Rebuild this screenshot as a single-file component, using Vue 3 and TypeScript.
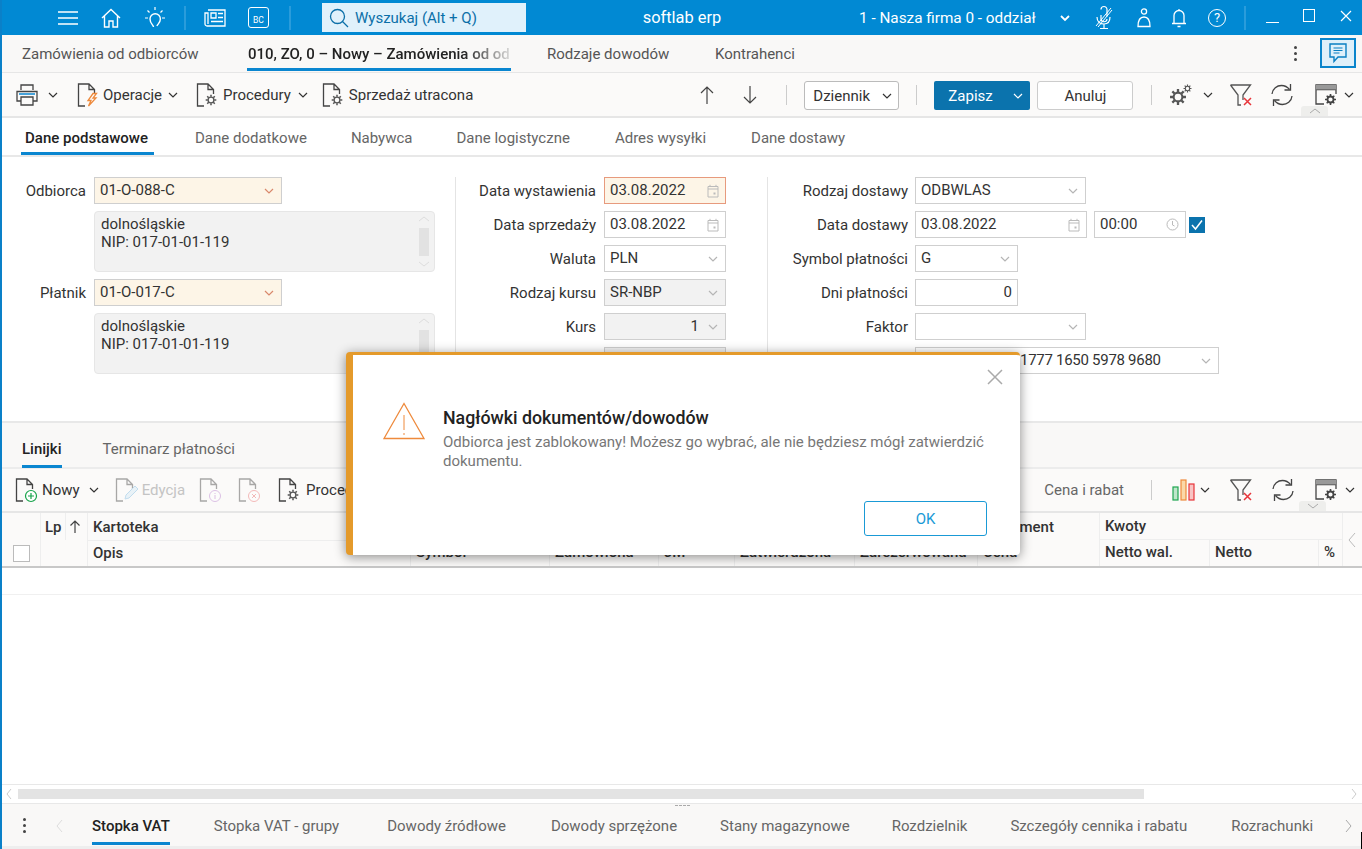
<script setup lang="ts">
const docTabs: string[] = ['Dane dodatkowe', 'Nabywca', 'Dane logistyczne', 'Adres wysyłki', 'Dane dostawy']
const bottomTabs: string[] = ['Stopka VAT - grupy', 'Dowody źródłowe', 'Dowody sprzężone', 'Stany magazynowe', 'Rozdzielnik', 'Szczegóły cennika i rabatu', 'Rozrachunki']
</script>

<template>
  <div class="app">
    <svg class="sprite" width="0" height="0" aria-hidden="true">
      <defs>
        <symbol id="chev" viewBox="0 0 10 6"><path d="M1 1l4 4 4-4" fill="none" stroke="currentColor" stroke-width="1.2" /></symbol>
        <symbol id="doc" viewBox="0 0 24 24"><path d="M8 23H1.500V1H12l5.500 5.500V11M12 1v5.500h5.500" fill="none" stroke="#444" stroke-width="1.300" /></symbol>
        <symbol id="gear" viewBox="0 0 14 14"><circle cx="7" cy="7" r="3.400" fill="none" stroke="currentColor" stroke-width="1.600" /><path d="M7 .8v2.400M7 10.800v2.400M.8 7h2.400M10.800 7h2.400M2.600 2.600l1.700 1.700M9.700 9.700l1.700 1.700M2.600 11.400l1.700-1.700M9.700 4.300l1.700-1.700" stroke="currentColor" stroke-width="1.800" /></symbol>
        <symbol id="cal" viewBox="0 0 12 14"><path d="M1 2.500h10v10.500H1zM1 5h10M3 .8v2M9 .8v2" fill="none" stroke="#bbb" stroke-width="1" /><rect x="6.500" y="8.500" width="2" height="2" fill="#bbb" /></symbol>
        <symbol id="filterx" viewBox="0 0 24 24"><path d="M1.500 2h20l-7.500 10v5M1.500 2L9 12v10h3" fill="none" stroke="#555" stroke-width="1.300" /><path d="M15 15l7 7M22 15l-7 7" stroke="#e8343a" stroke-width="1.500" /></symbol>
        <symbol id="refresh" viewBox="0 0 24 24"><path d="M2 11C2.500 5.500 7 2.500 11.500 2.500c3.500 0 6 1.500 8 4M22 13c-.5 5.500-5 8.500-9.500 8.500-3.500 0-6-1.500-8-4" fill="none" stroke="#444" stroke-width="1.300" /><path d="M20.500 1v6h-6M3.500 23v-6h6" fill="none" stroke="#444" stroke-width="1.300" /></symbol>
        <symbol id="wingear" viewBox="0 0 24 24"><path d="M10 21H2V2h20v9M2 6.500h20" fill="none" stroke="#444" stroke-width="1.300" /><rect x="2" y="2" width="20" height="4.500" fill="#999" /><circle cx="16.500" cy="16.500" r="3" fill="none" stroke="#444" stroke-width="1.800" /><path d="M16.500 11v2.500M16.500 19.500V22M11 16.500h2.500M19.500 16.500H22M12.700 12.700l1.800 1.800M18.500 18.500l1.800 1.800M12.700 20.300l1.800-1.800M18.500 14.500l1.800-1.800" stroke="#444" stroke-width="1.600" /></symbol>
      </defs>
    </svg>

    <!-- top bar -->
    <header class="topbar">
      <svg class="ml-hamb" width="20" height="14" viewBox="0 0 20 14"><path d="M0 1h20M0 7h20M0 13h20" stroke="#fff" stroke-width="1.300" /></svg>
      <svg class="ml-home" width="20" height="20" viewBox="0 0 20 20"><path d="M1 10l9-8.500 9 8.500M3.500 8v11h4.500v-6h4v6h4.500V8" fill="none" stroke="#fff" stroke-width="1.400" /></svg>
      <svg class="ml-bulb" width="24" height="24" viewBox="0 0 24 24"><path d="M12 1v3M2 12h3M19 12h3M4.500 4.500l2 2M19.500 4.500l-2 2" stroke="#fff" stroke-width="1.200" /><path d="M10.500 21c0-2-3.500-3.500-3.500-8a5.200 5.200 0 0 1 10.400 0c0 3.500-2.500 5-3.500 7" fill="none" stroke="#fff" stroke-width="1.400" /></svg>
      <span class="tdiv ml-d1"></span>
      <svg class="ml-news" width="22" height="18" viewBox="0 0 22 18"><path d="M4 1h17v16H3a2 2 0 0 1-2-2V4h3v11" fill="none" stroke="#fff" stroke-width="1.300" /><path d="M7 4h5v5H7zM14 4.500h5M14 8.500h5M7 12.500h12" fill="none" stroke="#fff" stroke-width="1.300" /></svg>
      <span class="bc">BC</span>
      <span class="tdiv ml-d2"></span>
      <div class="search">
        <svg width="20" height="20" viewBox="0 0 20 20"><circle cx="8.500" cy="8.500" r="7" fill="none" stroke="#0b6fa8" stroke-width="1.300" /><path d="M13.500 13.500l5.500 5.500" stroke="#0b6fa8" stroke-width="1.300" /></svg>
        <span>Wyszukaj (Alt + Q)</span>
      </div>
      <span class="brand">softlab erp</span>
      <span class="company">1 - Nasza firma 0 - oddział</span>
      <svg class="ml-cchev" width="10" height="6" viewBox="0 0 10 6"><path d="M1 1l4 4 4-4" fill="none" stroke="#fff" stroke-width="1.800" /></svg>
      <svg class="ml-mic" width="20" height="24" viewBox="0 0 20 24"><path d="M8 3.500a3 3 0 0 1 6 0v7M14 13a3 3 0 0 1-6-.5V9M4 11c0 4 2.500 7 7 7s6-3 6-7M11 18v4M7 22.500h8" fill="none" stroke="#fff" stroke-width="1.200" /><path d="M3 20L18 2M5 21L19 4" stroke="#fff" stroke-width="1" /></svg>
      <svg class="ml-user" width="14" height="20" viewBox="0 0 14 20"><circle cx="7" cy="3.500" r="2.600" fill="none" stroke="#fff" stroke-width="1.300" /><path d="M1 18.500c0-6 2-9.500 6-9.500s6 3.500 6 9.500z" fill="none" stroke="#fff" stroke-width="1.300" /></svg>
      <svg class="ml-bell" width="16" height="20" viewBox="0 0 16 20"><path d="M3 15V7.500a5 5 0 0 1 10 0V15M1 15.500h14M8 1v1.500M6.500 18.500h3" fill="none" stroke="#fff" stroke-width="1.300" /></svg>
      <span class="help">?</span>
      <span class="tdiv ml-d3"></span>
      <span class="wmin"></span>
      <span class="wmax"></span>
      <svg class="ml-x" width="12" height="12" viewBox="0 0 12 12"><path d="M1 1l10 10M11 1L1 11" stroke="#fff" stroke-width="1.200" /></svg>
    </header>

    <!-- page tabs -->
    <nav class="pagetabs">
      <span class="pt pt1">Zamówienia od odbiorców</span>
      <span class="pt pt2"><span class="fade">010, ZO, 0 – Nowy – Zamówienia od od</span></span>
      <span class="pt pt3">Rodzaje dowodów</span>
      <span class="pt pt4">Kontrahenci</span>
      <span class="dots"><i></i><i></i><i></i></span>
      <span class="chat">
        <svg width="20" height="22" viewBox="0 0 20 22"><path d="M2 2h16v13h-8l-4 4.500V15H2z" fill="none" stroke="#0a7fc2" stroke-width="1.400" /><path d="M5.500 6h9M5.500 8.500h9M5.500 11h6" stroke="#0a7fc2" stroke-width="1.200" /></svg>
      </span>
    </nav>

    <!-- main toolbar -->
    <div class="toolbar main">
      <svg class="m13" width="24" height="24" viewBox="0 0 24 24"><path d="M6 7V2h12v5M6 18H2V8.500h20V18h-4" fill="none" stroke="#444" stroke-width="1.300" /><path d="M6 14h12v8H6z" fill="none" stroke="#444" stroke-width="1.300" /><path d="M4 11h16" stroke="#0a86d0" stroke-width="1.500" /></svg>
      <svg class="chv m9" width="10" height="6"><use href="#chev" /></svg>
      <svg class="m19" width="24" height="24"><use href="#doc" /><path d="M16 10.500l-5 7h3l-2.500 5.500 7.500-8h-3l3.500-4.500z" fill="none" stroke="#ee8a3c" stroke-width="1.300" /></svg>
      <span class="tl m2">Operacje</span>
      <svg class="chv m6" width="10" height="6"><use href="#chev" /></svg>
      <svg class="m18" width="24" height="24"><use href="#doc" /><use href="#gear" x="9" y="11" width="12" height="12" color="#555" /></svg>
      <span class="tl m3">Procedury</span>
      <svg class="chv m7" width="10" height="6"><use href="#chev" /></svg>
      <svg class="m14" width="24" height="24"><use href="#doc" /><use href="#gear" x="9" y="11" width="12" height="12" color="#555" /></svg>
      <span class="tl m3">Sprzedaż utracona</span>
      <svg class="m-up" width="14" height="18" viewBox="0 0 14 18"><path d="M7 18V1M1 7l6-6 6 6" fill="none" stroke="#444" stroke-width="1.200" /></svg>
      <svg class="m-down" width="14" height="18" viewBox="0 0 14 18"><path d="M7 0v17M1 11l6 6 6-6" fill="none" stroke="#444" stroke-width="1.200" /></svg>
      <span class="vsep m-s1"></span>
      <span class="dz">Dziennik<svg class="chv" width="10" height="6"><use href="#chev" /></svg></span>
      <span class="vsep m-s2"></span>
      <span class="zapisz">Zapisz<svg width="10" height="6"><use href="#chev" /></svg></span>
      <span class="anuluj">Anuluj</span>
      <span class="vsep m-s3"></span>
      <svg class="m-gear" width="24" height="24" viewBox="0 0 24 24"><use href="#gear" x="0" y="5" width="18" height="18" color="#555" /><use href="#gear" x="14" y="1" width="9" height="9" color="#555" /></svg>
      <svg class="chv m10" width="10" height="6"><use href="#chev" /></svg>
      <svg class="m16" width="24" height="24"><use href="#filterx" /></svg>
      <svg class="m17" width="24" height="24"><use href="#refresh" /></svg>
      <svg class="m20" width="24" height="24"><use href="#wingear" /></svg>
      <svg class="chv m6" width="10" height="6"><use href="#chev" /></svg>
      <span class="handle up"><svg width="12" height="6" viewBox="0 0 12 6"><path d="M1 5l5-4 5 4" fill="none" stroke="#aaa" /></svg></span>
    </div>

    <!-- document tabs -->
    <nav class="doctabs">
      <span class="dt active">Dane podstawowe</span>
      <span v-for="t in docTabs" :key="t" class="dt">{{ t }}</span>
    </nav>

    <!-- form -->
    <section class="form">
      <div class="col c1">
        <label>Odbiorca</label>
        <div class="inp w188 req">01-O-088-C<svg class="ch or" width="10" height="6"><use href="#chev" /></svg></div>
        <div class="memo">
          <div>dolnośląskie<br />NIP: 017-01-01-119</div>
          <span class="msb"><svg width="12" height="6" viewBox="0 0 12 6"><path d="M1 5l5-4 5 4" fill="none" stroke="#ddd" /></svg><i></i><svg width="12" height="6" viewBox="0 0 12 6"><path d="M1 1l5 4 5-4" fill="none" stroke="#ddd" /></svg></span>
        </div>
        <label>Płatnik</label>
        <div class="inp w188 req">01-O-017-C<svg class="ch or" width="10" height="6"><use href="#chev" /></svg></div>
        <div class="memo">
          <div>dolnośląskie<br />NIP: 017-01-01-119</div>
          <span class="msb"><svg width="12" height="6" viewBox="0 0 12 6"><path d="M1 5l5-4 5 4" fill="none" stroke="#ddd" /></svg><i></i><svg width="12" height="6" viewBox="0 0 12 6"><path d="M1 1l5 4 5-4" fill="none" stroke="#ddd" /></svg></span>
        </div>
      </div>

      <div class="col c2">
        <label>Data wystawienia</label>
        <div class="inp err">03.08.2022<svg class="ch cal" width="12" height="14"><use href="#cal" /></svg></div>
        <label>Data sprzedaży</label>
        <div class="inp">03.08.2022<svg class="ch cal" width="12" height="14"><use href="#cal" /></svg></div>
        <label>Waluta</label>
        <div class="inp">PLN<svg class="ch lt" width="10" height="6"><use href="#chev" /></svg></div>
        <label>Rodzaj kursu</label>
        <div class="inp dis">SR-NBP<svg class="ch lt" width="10" height="6"><use href="#chev" /></svg></div>
        <label>Kurs</label>
        <div class="inp dis num">1<svg class="ch lt" width="10" height="6"><use href="#chev" /></svg></div>
        <label>Data kursu</label>
        <div class="inp dis"></div>
      </div>

      <div class="col c3">
        <label>Rodzaj dostawy</label>
        <div class="inp w171">ODBWLAS<svg class="ch lt" width="10" height="6"><use href="#chev" /></svg></div>
        <label>Data dostawy</label>
        <div class="tworow">
          <div class="inp w172">03.08.2022<svg class="ch cal" width="12" height="14"><use href="#cal" /></svg></div>
          <div class="inp w92">00:00<svg class="ch cal" width="13" height="13" viewBox="0 0 13 13"><circle cx="6.500" cy="6.500" r="5.500" fill="none" stroke="#bbb" /><path d="M6.500 3v4l2 1" fill="none" stroke="#bbb" /></svg></div>
          <span class="check"><svg width="16" height="16" viewBox="0 0 16 16"><path d="M3 8l3.500 4L13 3.500" fill="none" stroke="#fff" stroke-width="1.500" /></svg></span>
        </div>
        <label>Symbol płatności</label>
        <div class="inp w103">G<svg class="ch lt" width="10" height="6"><use href="#chev" /></svg></div>
        <label>Dni płatności</label>
        <div class="inp w103 num">0</div>
        <label>Faktor</label>
        <div class="inp w171"><svg class="ch lt" width="10" height="6"><use href="#chev" /></svg></div>
        <label>Rachunek</label>
        <div class="inp w304 acct">1777 1650 5978 9680<svg class="ch lt" width="10" height="6"><use href="#chev" /></svg></div>
      </div>
    </section>

    <!-- lines tabs -->
    <nav class="linetabs">
      <span class="lt-tab active">Linijki</span>
      <span class="lt-tab">Terminarz płatności</span>
    </nav>

    <div class="toolbar lines">
      <svg class="m13" width="24" height="24"><use href="#doc" /><circle cx="16" cy="18" r="5.500" fill="#fff" stroke="#17a34a" stroke-width="1.200" /><path d="M16 15v6M13 18h6" stroke="#17a34a" stroke-width="1.200" /></svg>
      <span class="tl m3">Nowy</span>
      <svg class="chv m9" width="10" height="6"><use href="#chev" /></svg>
      <svg class="dim m16" width="24" height="24"><use href="#doc" /><path d="M10 21l1-4 9-9 3 3-9 9z" fill="#d5e9f6" stroke="#7cb8e0" /></svg>
      <span class="tl dimt m3">Edycja</span>
      <svg class="dim m14" width="24" height="24"><use href="#doc" /><circle cx="16" cy="18" r="5.500" fill="#fff" stroke="#b57acb" /><path d="M16 15v1M16 17v4" stroke="#b57acb" /></svg>
      <svg class="dim m15" width="24" height="24"><use href="#doc" /><circle cx="16" cy="18" r="5.500" fill="#fff" stroke="#e86a6a" /><path d="M14 16l4 4M18 16l-4 4" stroke="#e86a6a" /></svg>
      <svg class="m16" width="24" height="24"><use href="#doc" /><use href="#gear" x="9" y="11" width="12" height="12" color="#555" /></svg>
      <span class="tl m4">Procedury</span>
      <div class="rightgroup">
        <span class="tl cena">Cena i rabat</span>
        <span class="vsep m27"></span>
        <svg class="m20" width="24" height="22" viewBox="0 0 24 22"><rect x="1" y="8" width="5" height="13" fill="#bfe6cb" stroke="#1fa650" stroke-width="1.200" /><rect x="9" y="1" width="5" height="20" fill="#fbd8a8" stroke="#ee8a3c" stroke-width="1.200" /><rect x="17" y="5" width="5" height="16" fill="#f8c4c4" stroke="#e8343a" stroke-width="1.200" /></svg>
        <svg class="chv m4" width="10" height="6"><use href="#chev" /></svg>
        <svg class="m19" width="24" height="24"><use href="#filterx" /></svg>
        <svg class="m18" width="24" height="24"><use href="#refresh" /></svg>
        <svg class="m19" width="24" height="24"><use href="#wingear" /></svg>
        <svg class="chv m7" width="10" height="6"><use href="#chev" /></svg>
      </div>
      <span class="handle down"><svg width="12" height="6" viewBox="0 0 12 6"><path d="M1 1l5 4 5-4" fill="none" stroke="#aaa" /></svg></span>
    </div>

    <!-- table -->
    <div class="thead">
      <div class="th sel"><span class="cb"></span></div>
      <div class="th lp">Lp</div>
      <div class="th sort"><svg width="12" height="13" viewBox="0 0 12 13"><path d="M6 13V1M1.500 5.500L6 1l4.500 4.500" fill="none" stroke="#444" stroke-width="1.200" /></svg></div>
      <div class="th lpb"></div>
      <div class="th kart">Kartoteka</div>
      <div class="th dok">Dokument</div>
      <div class="th kw">Kwoty</div>
      <div class="th pgr"><svg width="8" height="16" viewBox="0 0 8 16"><path d="M7 1L1 8l6 7" fill="none" stroke="#bbb" /></svg></div>
      <div class="th r2 opis">Opis</div>
      <div class="th r2 s1">Symbol</div>
      <div class="th r2 s2">Zamówiona</div>
      <div class="th r2 s3">JM</div>
      <div class="th r2 s4">Zatwierdzona</div>
      <div class="th r2 s5">Zarezerwowana</div>
      <div class="th r2 s6">Cena</div>
      <div class="th r2 s7">Netto wal.</div>
      <div class="th r2 s8">Netto</div>
      <div class="th r2 s9">%</div>
    </div>
    <div class="tbody"><div class="firstrow"></div></div>

    <div class="hscroll">
      <svg width="6" height="12" viewBox="0 0 6 12"><path d="M5 1L1 6l4 5" fill="none" stroke="#ccc" /></svg>
      <span class="thumb"></span>
      <svg class="sr" width="6" height="12" viewBox="0 0 6 12"><path d="M1 1l4 5-4 5" fill="none" stroke="#ccc" /></svg>
    </div>

    <nav class="bottomtabs">
      <span class="dots b"><i></i><i></i><i></i></span>
      <svg class="bl" width="7" height="14" viewBox="0 0 7 14"><path d="M6 1L1 7l5 6" fill="none" stroke="#ddd" /></svg>
      <span class="bt active">Stopka VAT</span>
      <span v-for="t in bottomTabs" :key="t" class="bt">{{ t }}</span>
      <svg class="br" width="7" height="14" viewBox="0 0 7 14"><path d="M1 1l5 6-5 6" fill="none" stroke="#aaa" /></svg>
      <span class="grip"></span>
    </nav>
    <span class="edge"></span>

    <!-- dialog -->
    <div class="modal">
      <svg class="close" width="16" height="16" viewBox="0 0 16 16"><path d="M1 1l14 14M15 1L1 15" stroke="#aaa" stroke-width="1.500" /></svg>
      <svg class="warn" width="42" height="38" viewBox="0 0 42 38"><path d="M21 1.500L1 36.500h40z" fill="none" stroke="#ee8a3c" stroke-width="1.300" /><path d="M21 13v15M21 31v2" stroke="#ee8a3c" stroke-width="1" /></svg>
      <div class="mtext">
        <h2>Nagłówki dokumentów/dowodów</h2>
        <p>Odbiorca jest zablokowany! Możesz go wybrać, ale nie będziesz mógł zatwierdzić dokumentu.</p>
      </div>
      <span class="ok">OK</span>
    </div>
  </div>
</template>

<style>
html, body { margin: 0; padding: 0; background: #fff; }
</style>

<style scoped>
.app { position: relative; width: 1362px; height: 849px; overflow: hidden; background: #fff; font-family: Roboto, "Liberation Sans", sans-serif; font-size: 15px; color: #333; box-sizing: border-box; border-left: 2px solid #0a80c8; display: flex; flex-direction: column; }
.sprite { position: absolute; }
svg { flex: none; display: block; overflow: visible; }

.topbar { height: 35px; margin-left: -2px; background: #0189d3; display: flex; align-items: center; flex: none; color: #fff; }
.ml-hamb { margin-left: 58px; }
.ml-home { margin-left: 23px; }
.ml-bulb { margin-left: 22px; }
.tdiv { width: 2px; height: 24px; background: #2a9cdb; flex: none; }
.ml-d1 { margin-left: 17px; }
.ml-news { margin-left: 18px; }
.bc { width: 21px; height: 21px; box-sizing: border-box; margin-left: 22px; border: 1.300px solid #fff; border-radius: 3px; font-size: 8.500px; display: flex; align-items: flex-end; justify-content: center; padding-bottom: 2px; flex: none; }
.ml-d2 { margin-left: 20px; }
.search { margin-left: 31px; width: 204px; height: 29px; background: #e0f1fb; display: flex; align-items: center; gap: 6px; padding-left: 7px; box-sizing: border-box; color: #0b6fa8; font-size: 15px; flex: none; }
.brand { width: 120px; margin-left: 96px; text-align: center; font-size: 16.400px; flex: none; }
.company { margin-left: 117px; width: 175px; font-size: 15.300px; white-space: nowrap; flex: none; }
.ml-cchev { margin-left: 26px; }
.ml-mic { margin-left: 23px; }
.ml-user { margin-left: 24px; }
.ml-bell { margin-left: 20px; }
.help { margin-left: 21px; width: 18px; height: 18px; box-sizing: border-box; border: 1.300px solid #fff; border-radius: 50%; font-size: 13px; display: flex; align-items: center; justify-content: center; flex: none; }
.ml-d3 { margin-left: 18px; }
.wmin { width: 13px; height: 1.500px; background: #fff; margin: 10px 0 0 20px; flex: none; }
.wmax { width: 12px; height: 13px; box-sizing: border-box; border: 1.300px solid #fff; margin: -5px 0 0 24px; flex: none; }
.ml-x { margin-left: 25px; margin-top: -3px; }

.pagetabs { height: 37px; background: #f9f8f7; border-bottom: 1px solid #e6e6e6; display: flex; flex: none; position: relative; font-size: 15px; }
.pt { height: 37px; line-height: 39px; color: #555; box-sizing: border-box; white-space: nowrap; }
.pt1 { margin-left: 20px; width: 225px; }
.pt2 { width: 264px; padding-left: 1px; border-bottom: 3px solid #0a86d0; height: 36px; color: #222; font-weight: 500; }
.fade { display: block; width: 263px; -webkit-mask-image: linear-gradient(90deg, #000 82%, rgba(0, 0, 0, .12) 100%); mask-image: linear-gradient(90deg, #000 82%, rgba(0, 0, 0, .12) 100%); }
.pt3 { margin-left: 36px; width: 168px; }
.pt4 { width: 100px; }
.dots { display: flex; flex-direction: column; gap: 3px; align-items: center; }
.dots i { width: 3px; height: 3px; border-radius: 50%; background: #444; display: block; }
.pagetabs .dots { margin: 11px 0 0 479px; }
.chat { position: absolute; left: 1318px; top: 3px; width: 36px; height: 30px; box-sizing: border-box; background: #dff0fa; border: 2px solid #0a85cc; display: flex; align-items: center; justify-content: center; }

.toolbar { display: flex; align-items: center; flex: none; position: relative; white-space: nowrap; background: #fbfaf9; }
.toolbar.main { border-bottom: 2px solid #e6e6e6; height: 43px; }
.chv { color: #333; }
.tl { font-size: 15px; color: #333; }
.dimt { color: #c4c4c4; }
.dim { opacity: .45; }
.m2 { margin-left: 2px; } .m3 { margin-left: 3px; } .m4 { margin-left: 4px; } .m5 { margin-left: 5px; } .m6 { margin-left: 6px; } .m7 { margin-left: 7px; } .m9 { margin-left: 9px; } .m10 { margin-left: 10px; } .m13 { margin-left: 13px; } .m14 { margin-left: 14px; } .m15 { margin-left: 15px; } .m16 { margin-left: 16px; } .m17 { margin-left: 17px; } .m18 { margin-left: 18px; } .m19 { margin-left: 19px; } .m20 { margin-left: 20px; } .m27 { margin-left: 27px; }
.m-up { margin-left: 227px; }
.m-down { margin-left: 29px; }
.vsep { width: 1px; height: 20px; background: #ccc; flex: none; }
.m-s1 { margin-left: 29px; }
.dz { margin-left: 17px; margin-top: 2px; width: 95px; height: 29px; box-sizing: border-box; border: 1px solid #bbb; border-radius: 3px; background: #fff; display: flex; align-items: center; justify-content: space-between; padding: 0 6px 0 8px; }
.m-s2 { margin-left: 17px; }
.zapisz { margin-left: 17px; margin-top: 2px; width: 96px; height: 29px; box-sizing: border-box; background: #0b73ad; color: #fff; border-radius: 2px; display: flex; align-items: center; justify-content: space-between; padding: 0 7px 0 14px; }
.anuluj { margin-left: 7px; margin-top: 2px; width: 96px; height: 29px; box-sizing: border-box; border: 1px solid #ccc; border-radius: 3px; background: #fff; display: flex; align-items: center; justify-content: center; }
.m-s3 { margin-left: 18px; }
.m-gear { margin-left: 17px; }
.handle { position: absolute; width: 27px; height: 10px; background: #eeeeec; display: flex; align-items: center; justify-content: center; }
.handle.up { left: 1299px; bottom: 0; border-radius: 3px 3px 0 0; }
.handle.down { left: 1297px; bottom: 0; border-radius: 3px 3px 0 0; }
.rightgroup { margin-left: auto; padding-right: 7px; display: flex; align-items: center; }
.cena { color: #666; }

.doctabs { height: 37px; background: #fff; border-bottom: 2px solid #e8e8e8; display: flex; flex: none; font-size: 15px; padding-left: 19px; }
.dt { height: 37px; line-height: 41px; padding: 0 3px; color: #666; white-space: nowrap; margin-left: 38px; box-sizing: border-box; }
.dt:nth-of-type(5), .dt:nth-of-type(6) { margin-left: 39px; }
.dt.active { margin-left: 0; width: 133px; padding: 0 0 0 4px; color: #222; font-weight: 500; border-bottom: 3px solid #0a86d0; }

.form { height: 266px; flex: none; display: flex; border-bottom: 2px solid #e8e8e8; padding-top: 20px; box-sizing: border-box; }
.col { display: grid; align-content: start; align-items: center; column-gap: 8px; font-size: 15px; }
.col label { text-align: right; color: #333; white-space: nowrap; }
.c1 { width: 454px; height: 218px; grid-template-columns: 84px 341px; row-gap: 7px; border-right: 1px solid #e4e4e4; box-sizing: border-box; }
.c2 { width: 312px; height: 218px; grid-template-columns: 140px 122px; grid-auto-rows: 27px; row-gap: 7px; border-right: 1px solid #e4e4e4; box-sizing: border-box; }
.c3 { grid-template-columns: 140px auto; column-gap: 7px; grid-auto-rows: 27px; row-gap: 7px; justify-items: start; }
.c3 label { justify-self: end; }
.inp { position: relative; height: 27px; box-sizing: border-box; border: 1px solid #cfcfcf; background: #fff; padding-left: 5px; line-height: 25px; color: #333; width: 122px; white-space: nowrap; }
.inp.req { background: #fdf5e7; }
.inp.err { background: #fdf5e7; border-color: #e79a7d; }
.inp.dis { background: #f2f2f2; }
.inp.num { text-align: right; padding-right: 26px; }
.c3 .inp.num { padding-right: 5px; }
.w188 { width: 188px; }
.w171 { width: 171px; }
.w172 { width: 172px; }
.w92 { width: 92px; margin-left: 7px; }
.w103 { width: 103px; }
.w304 { width: 304px; }
.acct { padding-left: 104px; letter-spacing: -.28px; }
.ch { position: absolute; right: 7px; top: 10px; }
.ch.lt { color: #b5b5b5; }
.ch.or { color: #d9886b; }
.ch.cal { right: 6px; top: 6px; }
.tworow { display: flex; align-items: center; }
.check { width: 16px; height: 16px; background: #0b73ad; margin-left: 3px; flex: none; }
.memo { grid-column: 2; height: 61px; position: relative; box-sizing: border-box; border: 1px solid #e6e6e6; border-radius: 4px; background: #f2f2f2; padding: 3px 6px; line-height: 18px; }
.msb { position: absolute; right: 4px; top: 4px; bottom: 4px; width: 12px; display: flex; flex-direction: column; align-items: center; justify-content: space-between; }
.msb i { flex: none; width: 10px; height: 28px; background: #e2e2e2; }

.linetabs { height: 44px; background: #f9f8f7; border-bottom: 2px solid #ececec; display: flex; flex: none; padding-left: 20px; font-size: 15px; }
.lt-tab { height: 44px; line-height: 52px; box-sizing: border-box; color: #666; margin-right: 41px; }
.lt-tab.active { color: #222; font-weight: 500; border-bottom: 3px solid #0a86d0; height: 45px; }

.toolbar.lines { height: 42px; border-bottom: 2px solid #e6e6e6; }

.thead { flex: none; height: 53px; display: grid; grid-template-columns: 38px 25px 22px 323px 139px 109px 76px 120px 123px 122px 110px 109px 24px 18px; grid-template-rows: 27px 26px; background: #fbfaf9; border-bottom: 2px solid #c8c8c8; font-weight: 500; color: #333; font-size: 15px; }
.th { display: flex; align-items: center; padding-left: 5px; box-sizing: border-box; border-left: 1px solid #eee; white-space: nowrap; overflow: hidden; min-width: 0; }
.r2 { padding-bottom: 2px; }
.sel { grid-area: 1 / 1 / 3 / 2; border-left: 0; padding: 28px 0 0 11px; }
.cb { width: 15px; height: 15px; border: 1px solid #bbb; background: #fff; flex: none; }
.lp { grid-area: 1 / 2 / 2 / 3; padding-left: 4px; }
.sort { grid-area: 1 / 3 / 2 / 4; padding-left: 3px; }
.lpb { grid-area: 2 / 2 / 3 / 4; }
.kart { grid-area: 1 / 4 / 2 / 10; }
.dok { grid-area: 1 / 10 / 2 / 11; padding-left: 8px; border-left: 0; }
.kw { grid-area: 1 / 11 / 2 / 14; border-bottom: 1px solid #eee; }
.pgr { grid-area: 1 / 14 / 3 / 15; padding: 0 0 0 5px; }
.opis { grid-area: 2 / 4; border-top: 1px solid #eee; }
.s1 { grid-area: 2 / 5; }
.s2 { grid-area: 2 / 6; }
.s3 { grid-area: 2 / 7; }
.s4 { grid-area: 2 / 8; }
.s5 { grid-area: 2 / 9; }
.s6 { grid-area: 2 / 10; }
.s7 { grid-area: 2 / 11; }
.s8 { grid-area: 2 / 12; }
.s9 { grid-area: 2 / 13; }

.tbody { flex: 1; min-height: 0; background: #fff; }
.firstrow { height: 26px; border-bottom: 1px solid #f0f0f0; }

.hscroll { flex: none; height: 18px; border-top: 1px solid #e8e8e8; border-bottom: 1px solid #e8e8e8; display: flex; align-items: center; gap: 6px; padding-left: 4px; background: #fff; position: relative; }
.thumb { width: 1126px; height: 10px; background: #e3e3e3; flex: none; }
.sr { position: absolute; right: 5px; top: 3px; }

.bottomtabs { flex: none; height: 42px; background: #f9f8f7; display: flex; position: relative; border-bottom: 3px solid #eee; font-size: 15px; white-space: nowrap; }
.dots.b { position: absolute; left: 21px; top: 14px; }
.bl { position: absolute; left: 54px; top: 15px; }
.br { position: absolute; left: 1343px; top: 15px; }
.bt { height: 41px; line-height: 44px; color: #666; margin-right: 45px; box-sizing: border-box; flex: none; }
.bt.active { margin-left: 90px; color: #222; font-weight: 500; border-bottom: 3px solid #0a86d0; margin-right: 44px; }
.bt:nth-of-type(3) { margin-right: 48px; }
.bt:nth-of-type(4) { margin-right: 45px; }
.bt:nth-of-type(5) { margin-right: 43px; }
.bt:nth-of-type(6) { margin-right: 42px; }
.bt:nth-of-type(7) { margin-right: 43px; }
.bt:nth-of-type(8) { margin-right: 44px; }
.grip { position: absolute; left: 673px; top: 1px; width: 15px; height: 0; border-top: 1px dashed #aaa; }
.edge { position: absolute; right: 0; bottom: 0; width: 1px; height: 17px; background: #000; }

.modal { position: absolute; left: 344px; top: 352px; width: 674px; height: 203px; box-sizing: border-box; background: #fff; border-left: 7px solid #e49a2b; border-top: 3px solid #e49a2b; border-radius: 4px; box-shadow: 0 2px 12px rgba(0, 0, 0, .45); padding: 52px 30px 0 30px; display: flex; gap: 18px; }
.close { position: absolute; left: 634px; top: 14px; }
.warn { margin-top: -5px; }
.mtext { flex: 1; min-width: 0; }
h2 { margin: 0; font-size: 17.800px; font-weight: 500; color: #222; line-height: 22px; }
p { margin: 4px 0 0; font-size: 15px; color: #777; line-height: 19px; }
.ok { position: absolute; left: 511px; top: 146px; width: 123px; height: 35px; box-sizing: border-box; border: 1px solid #1a9ad6; border-radius: 3px; color: #1a9ad6; display: flex; align-items: center; justify-content: center; font-size: 15px; }
</style>
